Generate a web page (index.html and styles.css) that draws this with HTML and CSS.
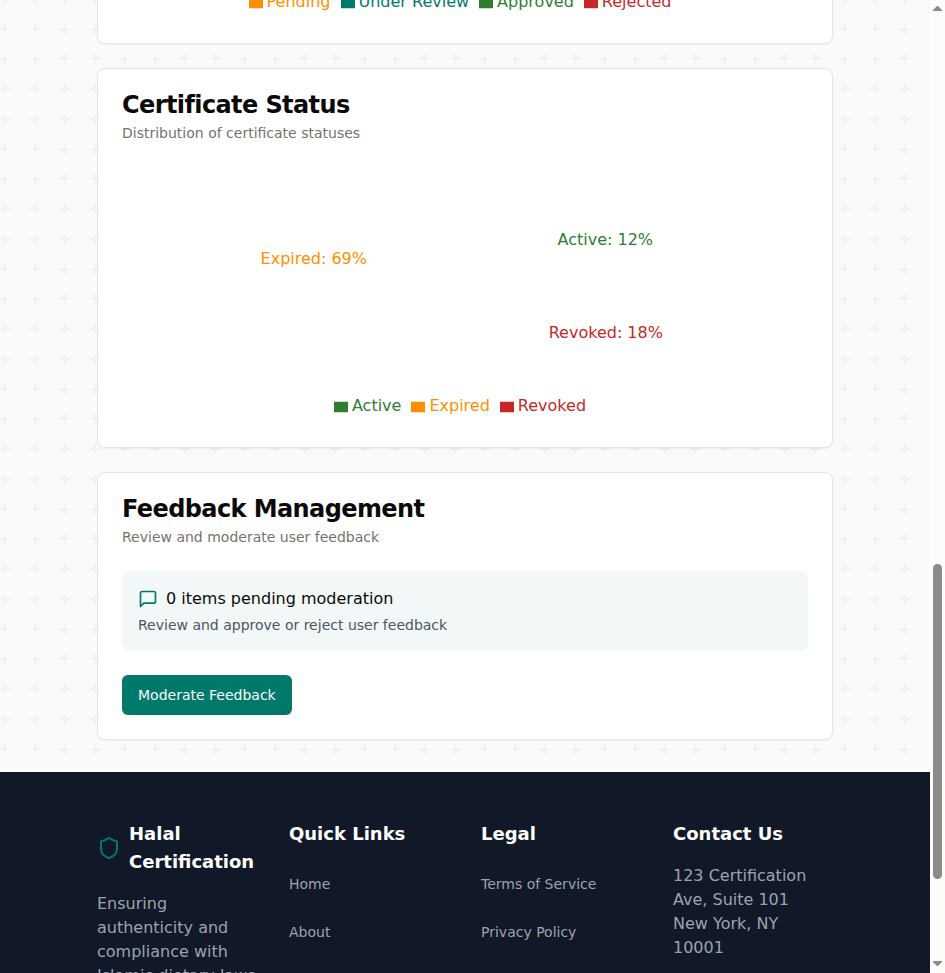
FILE: index.html
```html
<!DOCTYPE html>
<html lang="en">
<head>
<meta charset="utf-8">
<title>Halal Certification</title>
<link rel="stylesheet" href="styles.css">
</head>
<body>
<div class="viewport">
  <div class="page">
    <main class="content">
      <section class="card card-clipped">
        <ul class="legend">
          <li class="pending"><svg class="swatch" viewBox="0 0 32 32"><path d="M0 4h32v24H0z"/></svg>Pending</li>
          <li class="review"><svg class="swatch" viewBox="0 0 32 32"><path d="M0 4h32v24H0z"/></svg>Under Review</li>
          <li class="green"><svg class="swatch" viewBox="0 0 32 32"><path d="M0 4h32v24H0z"/></svg>Approved</li>
          <li class="red"><svg class="swatch" viewBox="0 0 32 32"><path d="M0 4h32v24H0z"/></svg>Rejected</li>
        </ul>
      </section>

      <section class="card">
        <h3 class="card-title">Certificate Status</h3>
        <p class="card-desc">Distribution of certificate statuses</p>
        <div class="chart">
          <svg class="pie" width="686" height="222" viewBox="0 0 686 222">
            <text class="green" x="435.5" y="78">Active: 12%</text>
            <text class="pending" x="245" y="97" text-anchor="end">Expired: 69%</text>
            <text class="red" x="426.7" y="171">Revoked: 18%</text>
          </svg>
          <ul class="legend">
            <li class="green"><svg class="swatch" viewBox="0 0 32 32"><path d="M0 4h32v24H0z"/></svg>Active</li>
            <li class="pending"><svg class="swatch" viewBox="0 0 32 32"><path d="M0 4h32v24H0z"/></svg>Expired</li>
            <li class="red"><svg class="swatch" viewBox="0 0 32 32"><path d="M0 4h32v24H0z"/></svg>Revoked</li>
          </ul>
        </div>
      </section>

      <section class="card">
        <h3 class="card-title">Feedback Management</h3>
        <p class="card-desc">Review and moderate user feedback</p>
        <div class="notice">
          <div class="notice-head">
            <svg class="icon" width="20" height="20" viewBox="0 0 24 24"><path d="M21 15a2 2 0 0 1-2 2H7l-4 4V5a2 2 0 0 1 2-2h14a2 2 0 0 1 2 2z"/></svg>
            <span>0 items pending moderation</span>
          </div>
          <p class="notice-text">Review and approve or reject user feedback</p>
        </div>
        <button class="button">Moderate Feedback</button>
      </section>
    </main>

    <footer class="footer">
      <div class="footer-grid">
        <div>
          <div class="brand">
            <svg class="icon" width="24" height="24" viewBox="0 0 24 24"><path d="M20 13c0 5-3.500 7.500-7.660 8.950a1 1 0 0 1-.67-.01C7.500 20.500 4 18 4 13V6a1 1 0 0 1 1-1c2 0 4.500-1.200 6.240-2.720a1.170 1.170 0 0 1 1.520 0C14.510 3.810 17 5 19 5a1 1 0 0 1 1 1z"/></svg>
            <h3>Halal Certification</h3>
          </div>
          <p>Ensuring authenticity and compliance with Islamic dietary laws</p>
        </div>
        <div>
          <h3>Quick Links</h3>
          <ul class="links"><li>Home</li><li>About</li></ul>
        </div>
        <div>
          <h3>Legal</h3>
          <ul class="links"><li>Terms of Service</li><li>Privacy Policy</li></ul>
        </div>
        <div>
          <h3>Contact Us</h3>
          <address>123 Certification Ave, Suite 101<br>New York, NY 10001</address>
        </div>
      </div>
    </footer>
  </div>
  <div class="scrollbar">
    <svg width="9" height="5" viewBox="0 0 9 5"><path d="M4 0h1l4 4v1H0V4z"/></svg>
    <div class="thumb"></div>
    <svg class="down" width="9" height="5" viewBox="0 0 9 5"><path d="M0 0h9v1L5 5H4L0 1z"/></svg>
  </div>
</div>
</body>
</html>
```
FILE: styles.css
```css
* { box-sizing: border-box; margin: 0; padding: 0; }

body {
  font: 16px/24px "DejaVu Sans", sans-serif;
  color: #0c0a09;
  overflow: hidden;
}

ul { list-style: none; }

.viewport { display: flex; height: 973px; overflow: hidden; }

.page {
  width: 930px;
  height: 973px;
  overflow: hidden;
  background: #fafafa url("data:image/svg+xml,%3Csvg xmlns='http://www.w3.org/2000/svg' width='30' height='30'%3E%3Cpath fill='%2300796b' fill-opacity='.05' d='M4 0h2v4h4v2H6v4H4V6H0V4h4z'/%3E%3C/svg%3E") 0 -6px;
}

.content {
  display: flex;
  flex-direction: column;
  gap: 24px;
  padding: 0 97px 32px;
}

.card {
  padding: 24px;
  background: #fff;
  border: 1px solid #e5e5e5;
  border-radius: 8px;
  box-shadow: 0 1px 2px rgba(0, 0, 0, .05);
}

.card-clipped {
  display: flex;
  flex-direction: column;
  justify-content: flex-end;
  height: 80px;
  margin-top: -36px;
  padding-bottom: 29px;
}

.card-title {
  font-size: 24px;
  line-height: 24px;
  letter-spacing: -0.6px;
  margin-bottom: 6px;
}

.card-desc {
  font-size: 14px;
  line-height: 20px;
  color: #78716c;
  margin-bottom: 24px;
}

.chart { height: 256px; }
.pie { display: block; margin-bottom: 5px; }
.pie text { fill: currentColor; }

.legend {
  display: flex;
  justify-content: center;
  gap: 10px;
  padding-right: 10px;
}

.legend li { display: flex; align-items: center; gap: 4px; }

.swatch {
  width: 14px;
  height: 14px;
  margin-top: 2px;
  fill: currentColor;
}

.pending { color: #ff8f00; }
.review { color: #00796b; }
.green { color: #2e7d32; }
.red { color: #c62828; }

.icon {
  flex: none;
  fill: none;
  stroke: #00796b;
  stroke-width: 2;
  stroke-linecap: round;
  stroke-linejoin: round;
}

.notice {
  padding: 16px;
  margin-bottom: 24px;
  border-radius: 8px;
  background: #f2f8f7;
}

.notice-head { display: flex; align-items: center; gap: 8px; margin-bottom: 4px; }

.notice-text { font-size: 14px; line-height: 20px; color: #4b5563; }

.button {
  display: block;
  height: 40px;
  padding: 0 16px;
  border: 0;
  border-radius: 6px;
  background: #00796b;
  color: #fafafa;
  font: 14px/20px "DejaVu Sans", sans-serif;
}

.footer {
  height: 300px;
  padding: 48px 97px;
  background: #111827;
  color: #9ca3af;
}

.footer-grid {
  display: grid;
  grid-template-columns: repeat(4, 160px);
  gap: 32px;
}

.footer h3 {
  margin-bottom: 16px;
  font-size: 18px;
  line-height: 28px;
  color: #fff;
}

.brand { display: flex; align-items: center; gap: 8px; margin-bottom: 16px; }
.footer .brand h3 { margin: 0; }

.links { display: grid; gap: 8px; font-size: 14px; line-height: 40px; }

address { font-style: normal; }

.scrollbar {
  display: flex;
  flex-direction: column;
  align-items: center;
  width: 15px;
  padding: 6px 0 7px;
  background: #fcfcfc;
}

.scrollbar svg { fill: #8b8b8b; }

.thumb {
  width: 9px;
  height: 315px;
  margin-top: 553px;
  border-radius: 5px;
  background: #8b8b8b;
}

.down { margin-top: auto; }
```
